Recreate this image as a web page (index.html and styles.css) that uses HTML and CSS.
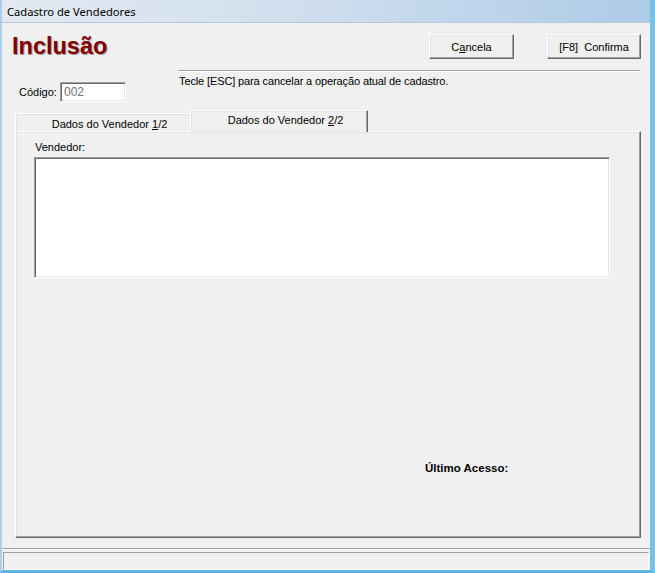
FILE: index.html
```html
<!DOCTYPE html>
<html lang="pt-BR">
<head>
  <meta charset="UTF-8" />
  <title>Cadastro de Vendedores</title>
  <link rel="stylesheet" href="styles.css">
</head>
<body>
  <div class="janela">
    <div class="titulo">Cadastro de Vendedores</div>
    <div class="cliente">
      <div class="topo">
        <h1 class="modo">Inclusão</h1>
        <div class="botoes">
          <button class="botao btn-cancela">C<u>a</u>ncela</button>
          <button class="botao btn-confirma">[F8]&nbsp;&nbsp;Confirma</button>
        </div>
      </div>

      <div class="info">
        <div class="codigo">
          <label class="codigo-rotulo">Código:</label>
          <div class="campo codigo-campo">002</div>
        </div>
        <div class="aviso">
          <div class="aviso-linha"></div>
          <div class="aviso-texto">Tecle [ESC] para cancelar a operação atual de cadastro.</div>
        </div>
      </div>

      <div class="abas">
        <div class="aba">Dados do Vendedor <u>1</u>/2</div>
        <div class="aba ativa">Dados do Vendedor <u>2</u>/2</div>
      </div>
      <div class="painel">
        <div class="rotulo">Vendedor:</div>
        <div class="campo memo"></div>
        <div class="ultimo">Último Acesso:</div>
      </div>

      <div class="rodape">
        <div class="rodape-linha"></div>
        <div class="status"></div>
      </div>
    </div>
  </div>
</body>
</html>
```

FILE: styles.css
```css
body {
  margin: 0;
  background: #f0f0f0;
  font-family: "Liberation Sans", Arial, sans-serif;
  font-size: 11px;
  color: #000;
}

.janela {
  width: 655px;
  height: 573px;
  box-sizing: border-box;
  border-left: 2px solid #a9cfec;
  border-right: 5px solid #78c0e8;
  border-bottom: 3px solid #5fb3e2;
  display: flex;
  flex-direction: column;
  overflow: hidden;
}

.titulo {
  height: 20px;
  padding: 2px 0 0 5px;
  font-family: "Noto Sans", sans-serif;
  font-size: 11.2px;
  line-height: 20px;
  color: #000;
  background: linear-gradient(to right, #e2e9f2, #d0dfee 45%, #aecbe8);
  border-bottom: 1px solid #b8c8d8;
}

.cliente {
  flex: 1;
  display: flex;
  flex-direction: column;
  background: #f0f0f0;
}

.topo {
  display: flex;
  align-items: flex-start;
  margin-top: 11px;
  padding: 0 9px 0 10px;
}
.modo {
  margin: 1px 0 0 0;
  font-size: 23.5px;
  line-height: 23px;
  font-weight: bold;
  color: #800000;
  text-shadow: 1px 1px 0 #a89c9c;
}
.botoes {
  margin-left: auto;
  display: flex;
  gap: 33px;
}
.botao {
  height: 25px;
  padding: 0;
  font-family: "Liberation Sans", Arial, sans-serif;
  font-size: 11px;
  color: #000;
  background: #f0f0f0;
  border: 1px solid;
  border-color: #fff #696969 #696969 #fff;
  box-shadow: inset -1px -1px 0 #a0a0a0, inset 1px 1px 0 #e3e3e3;
}
.btn-cancela { width: 85px; }
.btn-confirma { width: 94px; }

.info {
  display: flex;
  margin-top: 11px;
}
.codigo {
  width: 159px;
  padding: 12px 0 0 17px;
  display: flex;
  align-items: center;
  align-self: flex-start;
}
.codigo-rotulo {
  width: 41px;
}
.campo {
  box-sizing: border-box;
  background: #fff;
  border: 1px solid;
  border-color: #a0a0a0 #fff #fff #a0a0a0;
  box-shadow: inset 1px 1px 0 #696969, inset -1px -1px 0 #e3e3e3;
}
.codigo-campo {
  width: 66px;
  height: 20px;
  padding: 2px 0 0 3px;
  font-size: 12px;
  line-height: 14px;
  color: #707070;
}
.aviso {
  flex: 1;
  margin-right: 10px;
}
.aviso-linha {
  border-top: 1px solid #a0a0a0;
  border-bottom: 1px solid #fff;
}
.aviso-texto {
  padding: 3px 0 0 1px;
  line-height: 13px;
  letter-spacing: -0.12px;
}

.abas {
  display: flex;
  align-items: flex-end;
  margin-top: 8px;
  padding-left: 13px;
  position: relative;
  z-index: 1;
}
.aba {
  box-sizing: border-box;
  width: 175px;
  height: 19px;
  padding: 4px 0 0 13px;
  line-height: 13px;
  text-align: center;
  border-top: 1px solid #fff;
  border-left: 1px solid #fff;
  box-shadow: inset 1px 1px 0 #e3e3e3;
}
.aba.ativa {
  width: 178px;
  height: 22px;
  padding-top: 3px;
  background: #f0f0f0;
  border-right: 1px solid #696969;
  box-shadow: inset -1px 0 0 #a0a0a0, inset 1px 1px 0 #e3e3e3;
}

.painel {
  box-sizing: border-box;
  width: 626px;
  height: 407px;
  margin: -1px 0 0 13px;
  padding: 9px 0 0 19px;
  border: 1px solid;
  border-color: #fff #696969 #696969 #fff;
  box-shadow: inset -1px -1px 0 #a0a0a0, inset 1px 1px 0 #e3e3e3;
}
.rotulo {
  line-height: 13px;
}
.memo {
  width: 576px;
  height: 121px;
  margin: 3px 0 0 -1px;
}
.ultimo {
  margin: 184px 0 0 390px;
  font-size: 11.5px;
  line-height: 13px;
  font-weight: bold;
}

.rodape {
  margin-top: auto;
}
.rodape-linha {
  border-top: 1px solid #a0a0a0;
  border-bottom: 1px solid #fff;
  margin-bottom: 2px;
}
.status {
  height: 18px;
  box-sizing: border-box;
  margin: 0 1px;
  border: 1px solid;
  border-color: #a0a0a0 #fff #fff #a0a0a0;
}
```
